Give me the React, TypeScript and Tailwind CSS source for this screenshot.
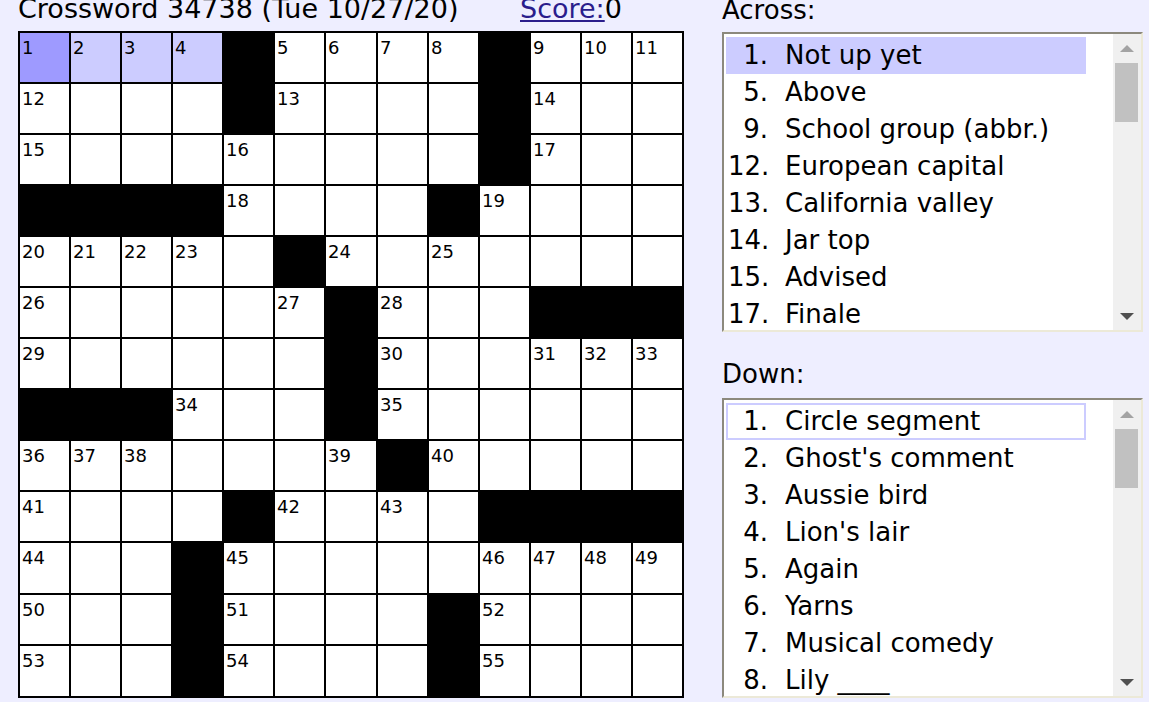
import React from "react";

const PATTERN = [
  "....#....#...",
  "....#....#...",
  ".........#...",
  "####....#....",
  ".....#.......",
  "......#...###",
  "......#......",
  "###...#......",
  ".......#.....",
  "....#....####",
  "...#.........",
  "...#....#....",
  "...#....#....",
];

const ACROSS: [number, string][] = [
  [1, "Not up yet"],
  [5, "Above"],
  [9, "School group (abbr.)"],
  [12, "European capital"],
  [13, "California valley"],
  [14, "Jar top"],
  [15, "Advised"],
  [17, "Finale"],
];

const DOWN: [number, string][] = [
  [1, "Circle segment"],
  [2, "Ghost's comment"],
  [3, "Aussie bird"],
  [4, "Lion's lair"],
  [5, "Again"],
  [6, "Yarns"],
  [7, "Musical comedy"],
  [8, "Lily ____"],
];

function computeNumbers(): (number | null)[][] {
  let n = 0;
  const out: (number | null)[][] = [];
  const isBlack = (r: number, c: number) =>
    r < 0 || c < 0 || r >= 13 || c >= 13 || PATTERN[r][c] === "#";
  for (let r = 0; r < 13; r++) {
    const row: (number | null)[] = [];
    for (let c = 0; c < 13; c++) {
      if (isBlack(r, c)) {
        row.push(null);
        continue;
      }
      const across = isBlack(r, c - 1) && !isBlack(r, c + 1);
      const down = isBlack(r - 1, c) && !isBlack(r + 1, c);
      if (across || down) {
        n++;
        row.push(n);
      } else row.push(null);
    }
    out.push(row);
  }
  return out;
}

function Grid() {
  const nums = computeNumbers();
  const cells: React.ReactNode[] = [];
  for (let r = 0; r < 13; r++) {
    for (let c = 0; c < 13; c++) {
      const black = PATTERN[r][c] === "#";
      let bg = "bg-white";
      if (black) bg = "bg-black";
      else if (r === 0 && c === 0) bg = "bg-[#9e9aff]";
      else if (r === 0 && c >= 1 && c <= 3) bg = "bg-[#ccccff]";
      cells.push(
        <div key={`${r}-${c}`} className={`${bg} min-h-0 min-w-0`}>
          {nums[r][c] !== null && (
            <div className="pl-[2px] pt-[5px] text-[18px] leading-[20px] text-black">
              {nums[r][c]}
            </div>
          )}
        </div>
      );
    }
  }
  return (
    <div className="grid w-fit grid-cols-[49px_49px_49px_49px_49px_49px_50px_49px_49px_49px_49px_49px_49px] grid-rows-[49px_49px_49px_49px_49px_49px_49px_49px_49px_49px_50px_49px_50px] gap-[2px] bg-black p-[2px]">
      {cells}
    </div>
  );
}

function Scrollbar() {
  return (
    <div className="flex w-[28px] flex-col bg-[#f0f0f0] pl-[2px]">
      <div className="flex h-[28px] items-center justify-center pr-[3px]">
        <div className="h-0 w-0 border-x-[7px] border-b-[7px] border-x-transparent border-b-[#a3a3a3]" />
      </div>
      <div className="mt-[1px] h-[59px] w-[23px] bg-[#c1c1c1]" />
      <div className="flex-1" />
      <div className="flex h-[28px] items-center justify-center pr-[3px]">
        <div className="h-0 w-0 border-x-[7px] border-t-[7px] border-x-transparent border-t-[#505050]" />
      </div>
    </div>
  );
}

function ClueList({
  clues,
  mode,
}: {
  clues: [number, string][];
  mode: "selected" | "outlined";
}) {
  return (
    <div className="flex h-[300px] w-[421px] border-2 border-t-[#8c897d] border-l-[#8c897d] border-b-[#ece9d8] border-r-[#ece9d8] bg-white">
      <div className="flex-1 overflow-hidden pl-[2px] pt-[3px]">
        {clues.map(([n, t], i) => {
          let cls = "border-2 border-transparent";
          if (i === 0 && mode === "selected") cls = "border-2 border-[#ccccff] bg-[#ccccff]";
          if (i === 0 && mode === "outlined") cls = "border-2 border-[#ccccff]";
          return (
            <div
              key={n}
              className={`${cls} flex h-[37px] w-[360px] items-center whitespace-nowrap text-[26px] leading-[33px] text-black`}
            >
              <span className="inline-block w-[40px] text-right">{n}.</span>
              <span className="ml-[17px]">{t}</span>
            </div>
          );
        })}
      </div>
      <Scrollbar />
    </div>
  );
}

export default function App() {
  return (
    <div className="flex h-[702px] w-[1149px] overflow-hidden bg-[#eeeeff] font-['DejaVu_Sans',sans-serif] text-black">
      <div className="ml-[18px] flex flex-col">
        <div className="h-[31px] whitespace-nowrap text-[27px] leading-[18px]">
          <span className="inline-block w-[502px]">Crossword 34738 (Tue 10/27/20)</span>
          <span className="text-[#2a1d8c] underline">Score:</span>
          <span>0</span>
        </div>
        <Grid />
      </div>
      <div className="ml-[38px] flex w-[421px] flex-col">
        <div className="h-[32px] text-[26px] leading-[20px]">Across:</div>
        <ClueList clues={ACROSS} mode="selected" />
        <div className="h-[66px] pt-[32px] text-[26px] leading-[20px]">Down:</div>
        <ClueList clues={DOWN} mode="outlined" />
      </div>
    </div>
  );
}
